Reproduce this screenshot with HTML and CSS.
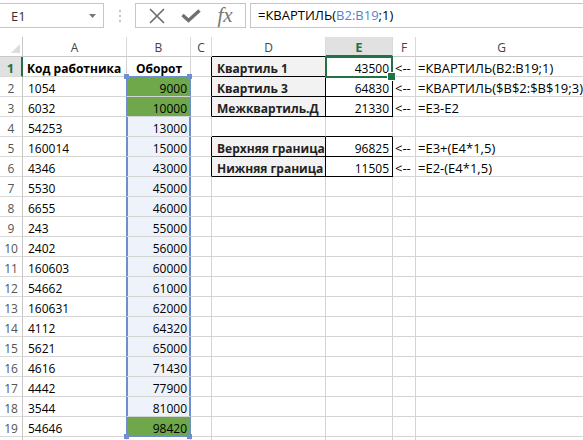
FILE: index.html
```html
<!DOCTYPE html>
<html>
<head>
  <meta charset="utf-8">
  <link rel="stylesheet" href="styles.css">
</head>
<body>

<div class="topbar">
  <div class="namebox">
    <span>E1</span>
    <svg width="7" height="4" viewBox="0 0 7 4"><path d="M0 0 H7 L3.5 4 Z" fill="#777"/></svg>
  </div>
  <div class="grip">
    <svg width="2" height="12" viewBox="0 0 2 12"><rect y="0" width="2" height="2" fill="#c2c2c2"/><rect y="5" width="2" height="2" fill="#c2c2c2"/><rect y="10" width="2" height="2" fill="#c2c2c2"/></svg>
  </div>
  <div class="fbuttons">
    <div class="fbtn">
      <svg width="18" height="16" viewBox="0 0 18 16"><path d="M2 1 L16 15 M16 1 L2 15" stroke="#6a6a6a" stroke-width="1.6" fill="none"/></svg>
    </div>
    <div class="fbtn">
      <svg width="20" height="14" viewBox="0 0 20 14"><path d="M1.5 6 L7.5 11.5 L18.5 1.5" stroke="#707070" stroke-width="3.4" fill="none"/></svg>
    </div>
    <div class="fbtn fx">fx</div>
  </div>
  <div class="finput">=КВАРТИЛЬ(<span class="ref">B2:B19</span>;1)</div>
</div>

<div class="sheet">
  <!-- column headers -->
  <div class="corner"><i></i></div>
  <div class="h">A</div>
  <div class="h">B</div>
  <div class="h">C</div>
  <div class="h bb">D</div>
  <div class="h on">E</div>
  <div class="h">F</div>
  <div class="h">G</div>

  <!-- 1 -->
  <div class="r on">1</div>
  <div class="b">Код работника</div>
  <div class="b mid rtop">Оборот</div>
  <div class="br"></div>
  <div class="lbl">Квартиль 1</div>
  <div class="val sel">43500<span class="selbox"></span></div>
  <div class="tx">&lt;--</div>
  <div class="tx">=КВАРТИЛЬ(B2:B19;1)</div>

  <!-- 2 -->
  <div class="r">2</div>
  <div class="ra">1054</div>
  <div class="rng first fill">9000</div>
  <div class="br"></div>
  <div class="lbl">Квартиль 3</div>
  <div class="val">64830</div>
  <div class="tx">&lt;--</div>
  <div class="tx">=КВАРТИЛЬ($B$2:$B$19;3)</div>

  <!-- 3 -->
  <div class="r">3</div>
  <div class="ra">6032</div>
  <div class="rng fill">10000</div>
  <div class="br"></div>
  <div class="lbl">Межквартиль.Д</div>
  <div class="val">21330</div>
  <div class="tx">&lt;--</div>
  <div class="tx">=E3-E2</div>

  <!-- 4 -->
  <div class="r">4</div>
  <div class="ra">54253</div>
  <div class="rng">13000</div>
  <div></div>
  <div class="bb"></div>
  <div class="bb"></div>
  <div></div>
  <div></div>

  <!-- 5 -->
  <div class="r">5</div>
  <div class="ra">160014</div>
  <div class="rng">15000</div>
  <div class="br"></div>
  <div class="lbl">Верхняя граница</div>
  <div class="val">96825</div>
  <div class="tx">&lt;--</div>
  <div class="tx">=E3+(E4*1,5)</div>

  <!-- 6 -->
  <div class="r">6</div>
  <div class="ra">4346</div>
  <div class="rng">43000</div>
  <div class="br"></div>
  <div class="lbl">Нижняя граница</div>
  <div class="val">11505</div>
  <div class="tx">&lt;--</div>
  <div class="tx">=E2-(E4*1,5)</div>

  <!-- 7 -->
  <div class="r">7</div><div class="ra">5530</div><div class="rng">45000</div>
  <div></div><div></div><div></div><div></div><div></div>

  <!-- 8 -->
  <div class="r">8</div><div class="ra">6655</div><div class="rng">46000</div>
  <div></div><div></div><div></div><div></div><div></div>

  <!-- 9 -->
  <div class="r">9</div><div class="ra">243</div><div class="rng">55000</div>
  <div></div><div></div><div></div><div></div><div></div>

  <!-- 10 -->
  <div class="r">10</div><div class="ra">2402</div><div class="rng">56000</div>
  <div></div><div></div><div></div><div></div><div></div>

  <!-- 11 -->
  <div class="r">11</div><div class="ra">160603</div><div class="rng">60000</div>
  <div></div><div></div><div></div><div></div><div></div>

  <!-- 12 -->
  <div class="r">12</div><div class="ra">54662</div><div class="rng">61000</div>
  <div></div><div></div><div></div><div></div><div></div>

  <!-- 13 -->
  <div class="r">13</div><div class="ra">160631</div><div class="rng">62000</div>
  <div></div><div></div><div></div><div></div><div></div>

  <!-- 14 -->
  <div class="r">14</div><div class="ra">4112</div><div class="rng">64320</div>
  <div></div><div></div><div></div><div></div><div></div>

  <!-- 15 -->
  <div class="r">15</div><div class="ra">5621</div><div class="rng">65000</div>
  <div></div><div></div><div></div><div></div><div></div>

  <!-- 16 -->
  <div class="r">16</div><div class="ra">4616</div><div class="rng">71430</div>
  <div></div><div></div><div></div><div></div><div></div>

  <!-- 17 -->
  <div class="r">17</div><div class="ra">4442</div><div class="rng">77900</div>
  <div></div><div></div><div></div><div></div><div></div>

  <!-- 18 -->
  <div class="r">18</div><div class="ra">3544</div><div class="rng">81000</div>
  <div></div><div></div><div></div><div></div><div></div>

  <!-- 19 -->
  <div class="r">19</div><div class="ra">54646</div><div class="rng last fill">98420</div>
  <div></div><div></div><div></div><div></div><div></div>

  <!-- 20 -->
  <div class="r"></div><div></div><div></div>
  <div></div><div></div><div></div><div></div><div></div>
</div>

</body>
</html>
```

FILE: styles.css
```css
* {
  box-sizing: border-box;
}

html, body {
  margin: 0;
  background: #fff;
}

body {
  width: 583px;
  height: 440px;
  overflow: hidden;
  font-family: "Open Sans", "Liberation Sans", sans-serif;
  font-size: 12px;
  color: #000;
}

/* formula bar */

.topbar {
  display: flex;
  align-items: flex-start;
  height: 37px;
  padding-top: 3px;
}

.namebox {
  width: 105px;
  height: 25px;
  margin-left: -1px;
  border: 1px solid #c6c6c6;
  display: flex;
  align-items: center;
  justify-content: space-between;
  padding: 0 7px 0 11px;
  font-size: 13px;
  color: #333;
}

.grip {
  width: 31px;
  height: 25px;
  display: flex;
  align-items: center;
  justify-content: center;
}

.fbuttons {
  width: 111px;
  height: 25px;
  border: 1px solid #c6c6c6;
  display: flex;
  align-items: center;
  padding-left: 4px;
}

.fbtn {
  width: 34px;
  display: flex;
  justify-content: center;
}

.fx {
  font-family: "Liberation Serif", serif;
  font-style: italic;
  font-size: 21px;
  line-height: 23px;
  color: #777;
}

.finput {
  flex: 1;
  height: 25px;
  margin-left: 4px;
  border: 1px solid #c6c6c6;
  border-right: none;
  padding-left: 7px;
  font-size: 13px;
  line-height: 23px;
  white-space: nowrap;
}

.ref {
  color: #5b7fcc;
}

/* grid */

.sheet {
  display: grid;
  grid-template-columns: 23px 104px 64px 21px 114px 67px 23px 172px;
  grid-auto-rows: 20px;
}

.sheet > div {
  border-right: 1px solid #d4d4d4;
  border-bottom: 1px solid #d4d4d4;
  padding: 2px 3px 0 4px;
  line-height: 19px;
  white-space: nowrap;
}

.sheet > .h {
  text-align: center;
  color: #444;
  padding: 1px 0 0;
  border-right-color: #dadada;
  border-bottom-color: #c8c8c8;
}

.sheet > .r {
  text-align: center;
  color: #555;
  padding: 2px 0 0;
  border-right-color: #c8c8c8;
  border-bottom-color: #dadada;
}

.sheet > .corner {
  display: flex;
  align-items: flex-end;
  justify-content: flex-end;
  padding: 0 2px 3px 0;
  border-bottom-color: #c8c8c8;
  border-right-color: #c8c8c8;
}

.corner i {
  width: 0;
  height: 0;
  border-left: 9px solid transparent;
  border-bottom: 9px solid #dcdcdc;
}

.sheet > .on {
  background: #e1e1e1;
  color: #217346;
  font-weight: bold;
  font-size: 13px;
}

.sheet > .h.on {
  border-bottom: 2px solid #217346;
}

.sheet > .r.on {
  border-right: 2px solid #217346;
}

.b {
  font-weight: bold;
}

.mid {
  text-align: center;
}

.sheet > .tx {
  padding-left: 2px;
  font-size: 13px;
}

/* bordered blocks */

.sheet > .bb {
  border-bottom-color: #000;
}

.sheet > .br {
  border-right-color: #000;
}

.sheet > .lbl {
  background: #f2f2f2;
  font-weight: bold;
  color: #222;
  padding-left: 5px;
  border-right-color: #000;
  border-bottom-color: #000;
}

.sheet > .val {
  text-align: right;
  border-right-color: #000;
  border-bottom-color: #000;
}

.sel {
  position: relative;
}

.selbox {
  position: absolute;
  left: -1px;
  right: -1px;
  top: -1px;
  bottom: -2px;
  border: 2px solid #217346;
}

.selbox::after {
  content: "";
  position: absolute;
  right: -5px;
  bottom: -5px;
  width: 7px;
  height: 7px;
  background: #217346;
  border: 1px solid #fff;
}

/* referenced range B2:B19 */

.sheet > .rtop {
  border-bottom-color: #6e8fce;
}

.sheet > .ra {
  border-right-color: #6e8fce;
  padding-left: 5px;
}

.sheet > .rng {
  background: #eef2fa;
  text-align: right;
  border-right-color: #6e8fce;
  box-shadow: inset 1px 0 #6e8fce, inset -1px 0 #6e8fce;
}

.sheet > .rng.fill {
  background: #6ea84a;
}

.sheet > .rng.first {
  position: relative;
  box-shadow: inset 1px 0 #6e8fce, inset -1px 0 #6e8fce, inset 0 1px #6e8fce;
}

.sheet > .rng.last {
  position: relative;
  border-bottom-color: #6e8fce;
  box-shadow: inset 1px 0 #6e8fce, inset -1px 0 #6e8fce, inset 0 -1px #6e8fce;
}

.rng.first::before,
.rng.first::after,
.rng.last::before,
.rng.last::after {
  content: "";
  position: absolute;
  width: 5px;
  height: 5px;
  background: #6e8fce;
}

.rng.first::before {
  left: -3px;
  top: -3px;
}

.rng.first::after {
  right: -2px;
  top: -3px;
}

.rng.last::before {
  left: -3px;
  bottom: -3px;
}

.rng.last::after {
  right: -2px;
  bottom: -3px;
}
```
